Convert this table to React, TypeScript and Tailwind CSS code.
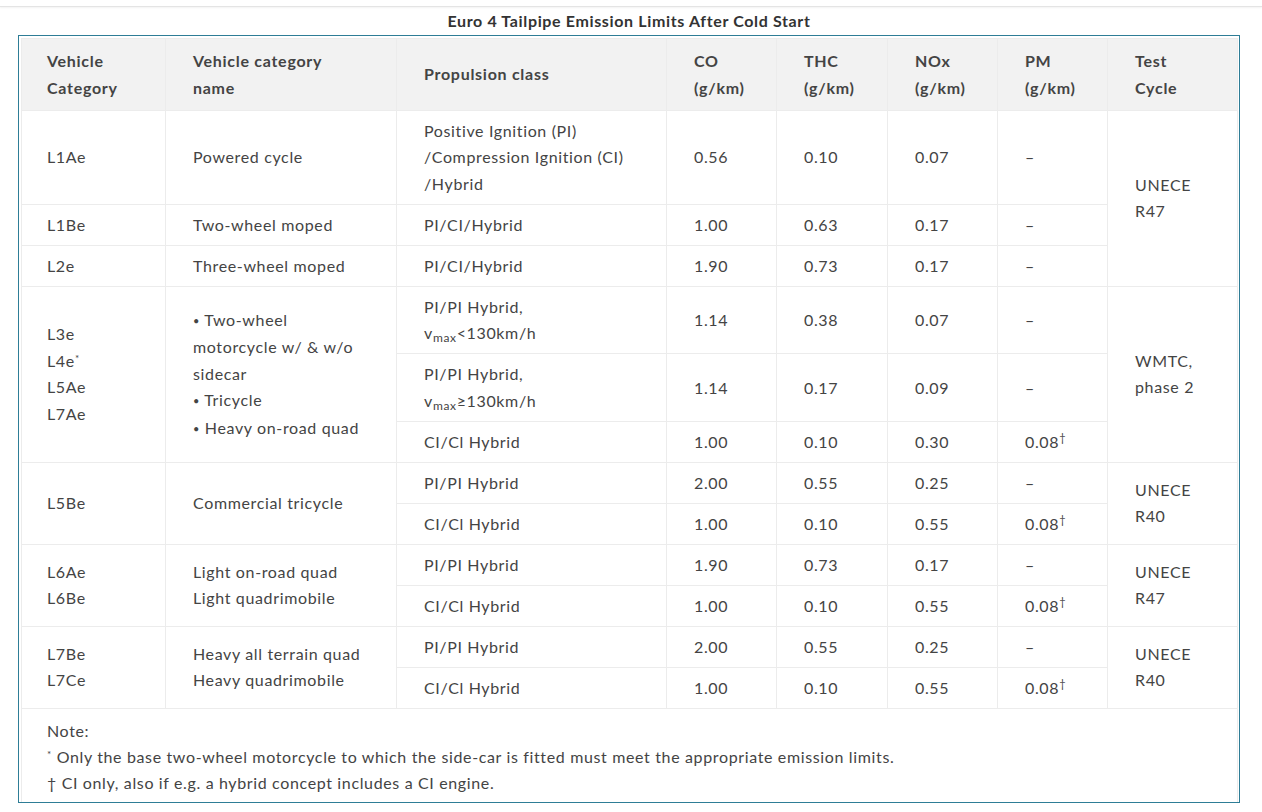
export default function App() {
  const th = "border border-[#ececec] bg-[#f2f2f2] px-[27px] first:pl-[25px] py-[9px] text-left align-middle font-bold leading-[26.5px] tracking-[0.045em]";
  const td = "border border-[#ececec] px-[27px] py-[7px] text-left align-middle font-normal";
  const tdm = td + " leading-[26.5px]";
  const td1 = "border border-[#ececec] pl-[25px] pr-[20px] py-[7px] text-left align-middle font-normal";
  const td1m = td1 + " leading-[26.5px]";
  const dag = <sup className="text-[11px]">†</sup>;
  const dot = <span className="text-[11px] align-[1px]">•</span>;

  return (
    <div className="min-h-[812px] bg-white font-['Lato',sans-serif] text-[#444]">
      <div className="h-[7px] border-b border-[#e4e4e4] shadow-[0_1px_2px_rgba(0,0,0,0.05)]" />
      <div className="w-[1258px] text-center text-[16px] font-bold leading-[28px] tracking-[0.04em] text-[#333]">
        Euro 4 Tailpipe Emission Limits After Cold Start
      </div>
      <div className="ml-[18px] w-[1222px] border border-[#2e7d96] px-[2px] pt-[2px]">
        <table className="w-full table-fixed border-collapse text-[16px] leading-[26px] tracking-[0.04em]">
          <colgroup>
            <col className="w-[144px]" />
            <col className="w-[231px]" />
            <col className="w-[270px]" />
            <col className="w-[110px]" />
            <col className="w-[111px]" />
            <col className="w-[110px]" />
            <col className="w-[110px]" />
            <col className="w-[130px]" />
          </colgroup>
          <thead>
            <tr>
              <th className={th}>Vehicle<br />Category</th>
              <th className={th}>Vehicle category<br />name</th>
              <th className={th}>Propulsion class</th>
              <th className={th}>CO<br />(g/km)</th>
              <th className={th}>THC<br />(g/km)</th>
              <th className={th}>NOx<br />(g/km)</th>
              <th className={th}>PM<br />(g/km)</th>
              <th className={th}>Test<br />Cycle</th>
            </tr>
          </thead>
          <tbody>
            <tr>
              <td className={td1}>L1Ae</td>
              <td className={td}>Powered cycle</td>
              <td className={td + " leading-[26.3px]"}>Positive Ignition (PI)<br />/Compression Ignition (CI)<br />/Hybrid</td>
              <td className={td}>0.56</td>
              <td className={td}>0.10</td>
              <td className={td}>0.07</td>
              <td className={td}>–</td>
              <td className={tdm} rowSpan={3}>UNECE<br />R47</td>
            </tr>
            <tr>
              <td className={td1}>L1Be</td>
              <td className={td}>Two-wheel moped</td>
              <td className={td}>PI/CI/Hybrid</td>
              <td className={td}>1.00</td>
              <td className={td}>0.63</td>
              <td className={td}>0.17</td>
              <td className={td}>–</td>
            </tr>
            <tr>
              <td className={td1}>L2e</td>
              <td className={td}>Three-wheel moped</td>
              <td className={td}>PI/CI/Hybrid</td>
              <td className={td}>1.90</td>
              <td className={td}>0.73</td>
              <td className={td}>0.17</td>
              <td className={td}>–</td>
            </tr>
            <tr>
              <td className={td1m} rowSpan={3}>
                L3e<br />L4e<sup className="text-[10px]">*</sup><br />L5Ae<br />L7Ae
              </td>
              <td className={tdm} rowSpan={3}>
                {dot} Two-wheel<br />motorcycle w/ &amp; w/o<br />sidecar<br />{dot} Tricycle<br />{dot} Heavy on-road quad
              </td>
              <td className={td + " leading-[26.2px]"}>PI/PI Hybrid,<br />v<sub>max</sub>&lt;130km/h</td>
              <td className={td}>1.14</td>
              <td className={td}>0.38</td>
              <td className={td}>0.07</td>
              <td className={td}>–</td>
              <td className={tdm} rowSpan={3}>WMTC,<br />phase 2</td>
            </tr>
            <tr>
              <td className={td + " leading-[26.2px]"}>PI/PI Hybrid,<br />v<sub>max</sub>≥130km/h</td>
              <td className={td}>1.14</td>
              <td className={td}>0.17</td>
              <td className={td}>0.09</td>
              <td className={td}>–</td>
            </tr>
            <tr>
              <td className={td}>CI/Cl Hybrid</td>
              <td className={td}>1.00</td>
              <td className={td}>0.10</td>
              <td className={td}>0.30</td>
              <td className={td}>0.08{dag}</td>
            </tr>
            <tr>
              <td className={td1} rowSpan={2}>L5Be</td>
              <td className={td} rowSpan={2}>Commercial tricycle</td>
              <td className={td}>PI/PI Hybrid</td>
              <td className={td}>2.00</td>
              <td className={td}>0.55</td>
              <td className={td}>0.25</td>
              <td className={td}>–</td>
              <td className={tdm} rowSpan={2}>UNECE<br />R40</td>
            </tr>
            <tr>
              <td className={td}>CI/Cl Hybrid</td>
              <td className={td}>1.00</td>
              <td className={td}>0.10</td>
              <td className={td}>0.55</td>
              <td className={td}>0.08{dag}</td>
            </tr>
            <tr>
              <td className={td1m} rowSpan={2}>L6Ae<br />L6Be</td>
              <td className={tdm} rowSpan={2}>Light on-road quad<br />Light quadrimobile</td>
              <td className={td}>PI/PI Hybrid</td>
              <td className={td}>1.90</td>
              <td className={td}>0.73</td>
              <td className={td}>0.17</td>
              <td className={td}>–</td>
              <td className={tdm} rowSpan={2}>UNECE<br />R47</td>
            </tr>
            <tr>
              <td className={td}>CI/Cl Hybrid</td>
              <td className={td}>1.00</td>
              <td className={td}>0.10</td>
              <td className={td}>0.55</td>
              <td className={td}>0.08{dag}</td>
            </tr>
            <tr>
              <td className={td1m} rowSpan={2}>L7Be<br />L7Ce</td>
              <td className={tdm} rowSpan={2}>Heavy all terrain quad<br />Heavy quadrimobile</td>
              <td className={td}>PI/PI Hybrid</td>
              <td className={td}>2.00</td>
              <td className={td}>0.55</td>
              <td className={td}>0.25</td>
              <td className={td}>–</td>
              <td className={tdm} rowSpan={2}>UNECE<br />R40</td>
            </tr>
            <tr>
              <td className={td}>CI/Cl Hybrid</td>
              <td className={td}>1.00</td>
              <td className={td}>0.10</td>
              <td className={td}>0.55</td>
              <td className={td}>0.08{dag}</td>
            </tr>
            <tr>
              <td className="border-x border-t border-[#ececec] pl-[25px] pr-[27px] pt-[9px] pb-[6px] text-left" colSpan={8}>
                Note:<br />
                <sup className="text-[10px]">*</sup> Only the base two-wheel motorcycle to which the side-car is fitted must meet the appropriate emission limits.<br />
                † CI only, also if e.g. a hybrid concept includes a CI engine.
              </td>
            </tr>
          </tbody>
        </table>
      </div>
    </div>
  );
}
